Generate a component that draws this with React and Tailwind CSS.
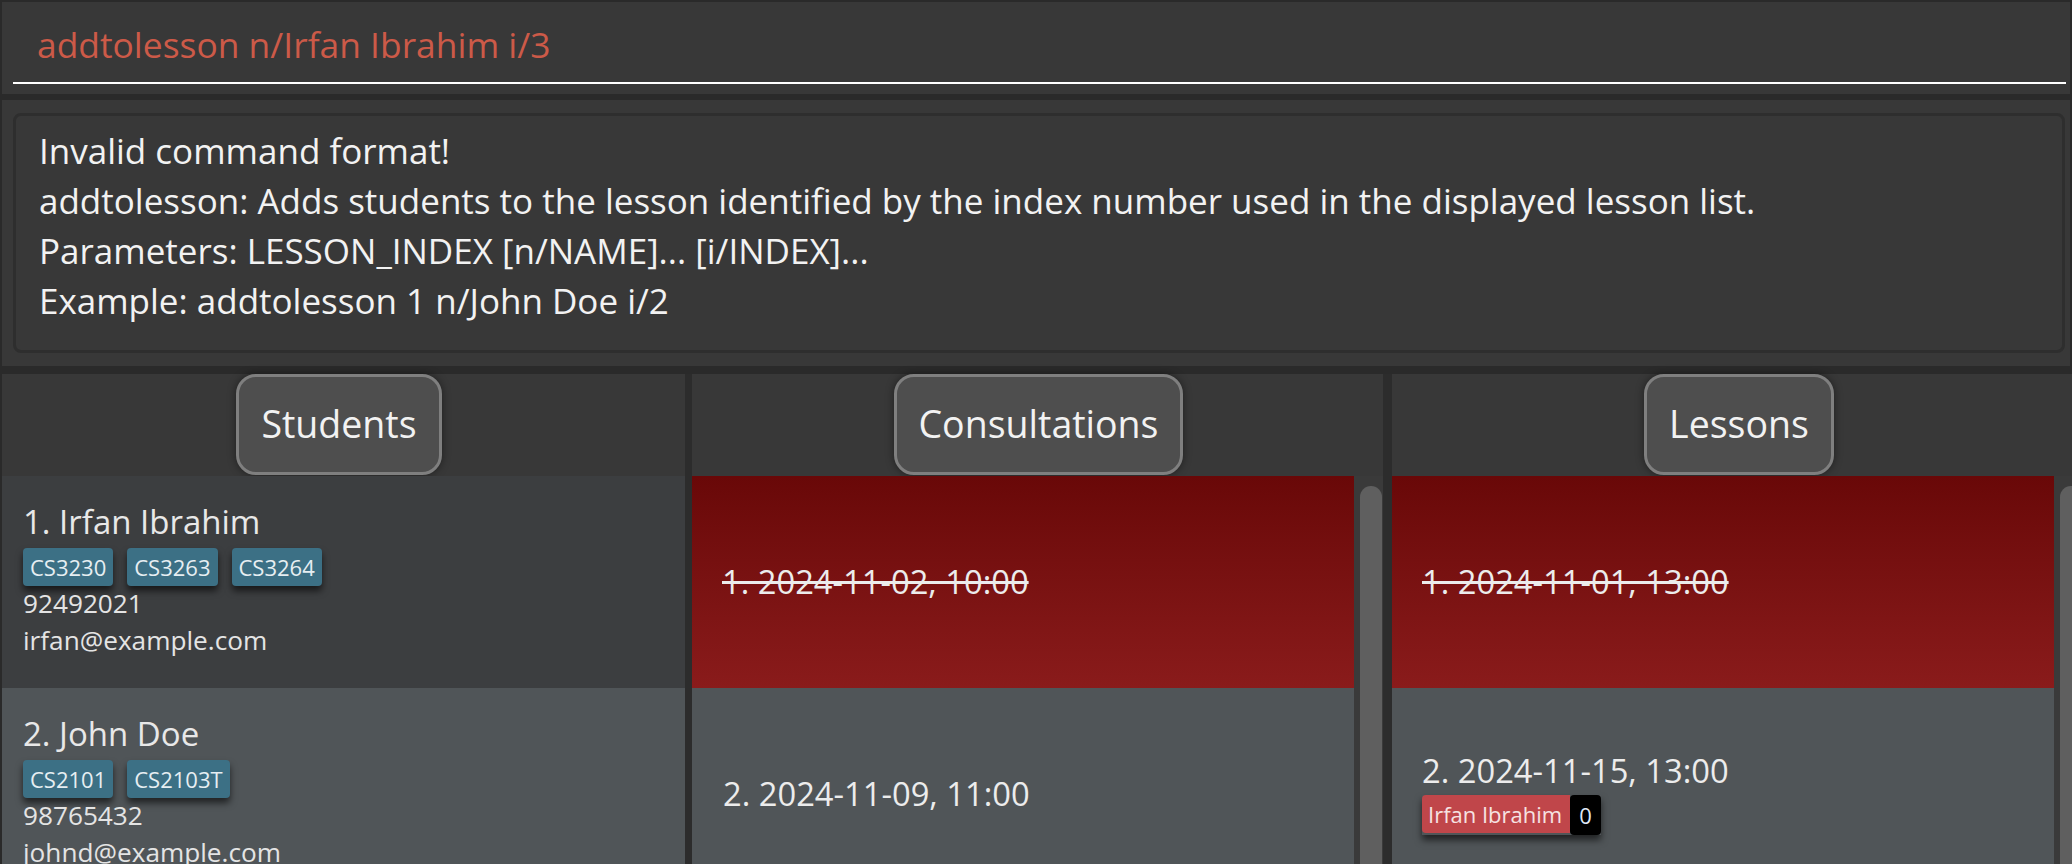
import React from "react";

function Tag({ children }) {
  return (
    <span className="h-[38px] px-[7px] flex items-center rounded-[4px] bg-[#3c7085] text-[22px] text-[#e6eef2] shadow-[0_5px_7px_rgba(0,0,0,0.6)]">
      {children}
    </span>
  );
}

function StudentRow({ bg, name, tags, phone, email }) {
  return (
    <div className={`h-[212px] shrink-0 ${bg} pl-[21px] pt-[26px]`}>
      <div className="text-[33px] leading-[40px] text-[#e8e8e8]">{name}</div>
      <div className="mt-[6px] flex gap-[14px]">
        {tags.map((t) => (
          <Tag key={t}>{t}</Tag>
        ))}
      </div>
      <div className="text-[26.2px] leading-[37px] text-[#e4e4e4] -mt-[1px]">{phone}</div>
      <div className="text-[26.2px] leading-[37px] text-[#e4e4e4]">{email}</div>
    </div>
  );
}

function Header({ title, pad }) {
  return (
    <div className={`h-[102px] shrink-0 bg-[#383838] flex justify-center ${pad}`}>
      <div className="h-[101px] px-[22px] border-[3px] border-[#7f7f7f] rounded-[20px] bg-[#4e4e4e] flex items-center text-[37.5px] text-[#f2f2f2] shadow-[0_0_8px_rgba(0,0,0,0.45)]">
        {title}
      </div>
    </div>
  );
}

function DoneRow({ label }) {
  return (
    <div className="h-[212px] shrink-0 bg-linear-to-b from-[#690808] to-[#8a1b1b] pl-[30px] flex items-center">
      <span className="text-[32.7px] leading-[40px] text-[#ececec] line-through">{label}</span>
    </div>
  );
}

export default function App() {
  return (
    <div className="w-[2072px] h-[864px] overflow-hidden bg-[#2a2a2a] flex flex-col font-['Open_Sans',sans-serif]">
      {/* Command box */}
      <div className="mt-[2px] mx-[2px] h-[92px] shrink-0 bg-[#383838]">
        <div className="ml-[11px] mr-[4px] h-[82px] border-b-2 border-white pt-[18px] pl-[24px] text-[35.4px] leading-[48px] text-[#cc5a48]">
          addtolesson n/Irfan Ibrahim i/3
        </div>
      </div>

      {/* Result display */}
      <div className="mt-[6px] mx-[2px] h-[266px] shrink-0 bg-[#383838] pt-[13px] pl-[11px] pr-[5px]">
        <div className="h-[240px] rounded-[8px] border-[3px] border-[#2e2e2e] pl-[23px] pt-[10px] text-[35px] leading-[50px] text-[#f2f2f2]">
          <div>Invalid command format!</div>
          <div>addtolesson: Adds students to the lesson identified by the index number used in the displayed lesson list.</div>
          <div>Parameters: LESSON_INDEX [n/NAME]... [i/INDEX]...</div>
          <div>Example: addtolesson 1 n/John Doe i/2</div>
        </div>
      </div>

      {/* Panels */}
      <div className="mt-[8px] flex flex-1 min-h-0">
        {/* Students */}
        <div className="ml-[2px] w-[683px] shrink-0 flex flex-col">
          <Header title="Students" pad="pr-[9px]" />
          <div className="flex flex-col">
            <StudentRow
              bg="bg-[#3c3e40]"
              name="1. Irfan Ibrahim"
              tags={["CS3230", "CS3263", "CS3264"]}
              phone="92492021"
              email="irfan@example.com"
            />
            <StudentRow
              bg="bg-[#505558]"
              name="2. John Doe"
              tags={["CS2101", "CS2103T"]}
              phone="98765432"
              email="johnd@example.com"
            />
          </div>
        </div>

        <div className="w-[7px] shrink-0 bg-[#2c2c2c]" />

        {/* Consultations */}
        <div className="w-[691px] shrink-0 flex flex-col">
          <Header title="Consultations" pad="pl-[2px]" />
          <div className="flex flex-1 min-h-0">
            <div className="w-[662px] shrink-0 flex flex-col">
              <DoneRow label="1. 2024-11-02, 10:00" />
              <div className="h-[212px] shrink-0 bg-[#505558] pl-[31px] flex items-center">
                <span className="text-[32.7px] leading-[40px] text-[#ececec]">2. 2024-11-09, 11:00</span>
              </div>
            </div>
            <div className="flex-1 bg-[#3a3a3a] pt-[10px] pl-[6px]">
              <div className="w-[22px] h-[420px] rounded-[11px] bg-[#5f5f5f]" />
            </div>
          </div>
        </div>

        <div className="w-[9px] shrink-0 bg-[#2c2c2c]" />

        {/* Lessons */}
        <div className="flex-1 min-w-0 flex flex-col">
          <Header title="Lessons" pad="pl-[14px]" />
          <div className="flex flex-1 min-h-0">
            <div className="w-[662px] shrink-0 flex flex-col">
              <DoneRow label="1. 2024-11-01, 13:00" />
              <div className="h-[212px] shrink-0 bg-[#505558] pl-[30px] flex flex-col justify-center">
                <div className="text-[32.7px] leading-[40px] text-[#ececec] mt-[-2px]">2. 2024-11-15, 13:00</div>
                <div className="mt-[4px] flex shadow-[0_5px_7px_rgba(0,0,0,0.6)] self-start">
                  <span className="h-[38px] pl-[6px] pr-[8px] flex items-center rounded-l-[4px] bg-[#c0464a] text-[22px] text-[#f6e2e2]">
                    Irfan Ibrahim
                  </span>
                  <span className="h-[40px] px-[9px] flex items-center rounded-[4px] bg-black text-[22px] text-[#dfe8f5]">
                    0
                  </span>
                </div>
              </div>
            </div>
            <div className="flex-1 bg-[#3a3a3a] pt-[10px] pl-[6px] overflow-hidden">
              <div className="w-[22px] h-[420px] rounded-[11px] bg-[#5f5f5f]" />
            </div>
          </div>
        </div>
      </div>
    </div>
  );
}
